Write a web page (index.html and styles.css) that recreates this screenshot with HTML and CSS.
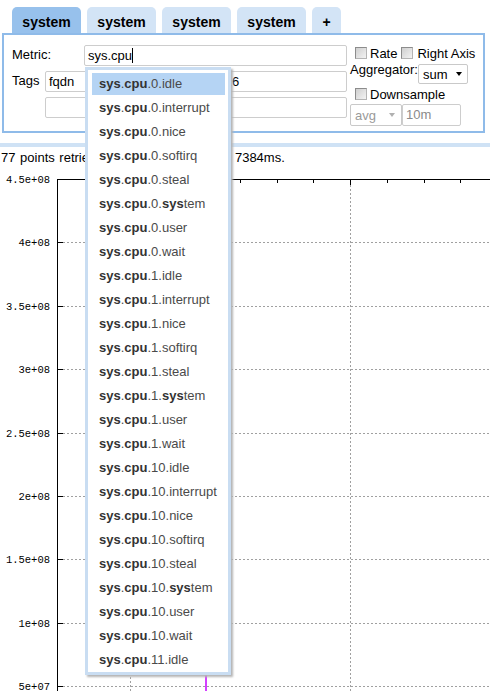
FILE: index.html
```html
<!DOCTYPE html>
<html>
<head>
<meta charset="utf-8">
<title>Graph</title>
<link rel="stylesheet" href="styles.css">
</head>
<body>
<div class="tabs">
  <div class="tab active">system</div>
  <div class="tab">system</div>
  <div class="tab">system</div>
  <div class="tab">system</div>
  <div class="tab plus">+</div>
</div>
<div class="panel">
  <div class="left">
    <div class="row r1"><span class="lbl metric-lbl">Metric:</span><div class="field metric">sys.cpu<span class="caret"></span></div></div>
    <div class="row r2"><span class="lbl tags-lbl">Tags</span><div class="field tagk">fqdn</div><div class="field tagv">10.100.200.16</div></div>
    <div class="row r3"><div class="field tagk"></div><div class="field tagv"></div></div>
  </div>
  <div class="right">
    <div class="rrow rrow1"><span class="cb cb1"></span>Rate<span class="cb cb2"></span>Right Axis</div>
    <div class="rrow rrow2"><span class="agg-lbl">Aggregator:</span><div class="select sum"><span>sum</span><i class="arrow"></i></div></div>
    <div class="rrow rrow3"><span class="cb cb1"></span>Downsample</div>
    <div class="rrow rrow4"><div class="select dis"><span>avg</span><i class="arrow"></i></div><div class="field ds">10m</div></div>
  </div>
</div>
<div class="bar"></div>
<div class="status">77 points retrieved, 77 points plotted in 7384ms.</div>
<svg class="graph" width="490" height="526" viewBox="0 0 490 526">
  <g class="grid" stroke="#a0a0a0" stroke-width="1" stroke-dasharray="2,2" fill="none">
    <line x1="63" y1="77.5" x2="490" y2="77.5"/>
    <line x1="63" y1="141.5" x2="490" y2="141.5"/>
    <line x1="63" y1="204.5" x2="490" y2="204.5"/>
    <line x1="63" y1="268.5" x2="490" y2="268.5"/>
    <line x1="63" y1="331.5" x2="490" y2="331.5"/>
    <line x1="63" y1="394.5" x2="490" y2="394.5"/>
    <line x1="63" y1="458.5" x2="490" y2="458.5"/>
    <line x1="63" y1="521.5" x2="490" y2="521.5"/>
    <line x1="350.5" y1="20" x2="350.5" y2="526"/>
    <line x1="130.5" y1="20" x2="130.5" y2="526"/>
  </g>
  <g stroke="#000" stroke-width="1" fill="none">
    <line x1="57.5" y1="14" x2="57.5" y2="526"/>
    <line x1="57" y1="14.5" x2="490" y2="14.5"/>
    <line x1="57" y1="77.5" x2="63" y2="77.5"/>
    <line x1="57" y1="141.5" x2="63" y2="141.5"/>
    <line x1="57" y1="204.5" x2="63" y2="204.5"/>
    <line x1="57" y1="268.5" x2="63" y2="268.5"/>
    <line x1="57" y1="331.5" x2="63" y2="331.5"/>
    <line x1="57" y1="394.5" x2="63" y2="394.5"/>
    <line x1="57" y1="458.5" x2="63" y2="458.5"/>
    <line x1="57" y1="521.5" x2="63" y2="521.5"/>
    <line x1="93.5" y1="14" x2="93.5" y2="18"/>
    <line x1="130.5" y1="14" x2="130.5" y2="20"/>
    <line x1="167.5" y1="14" x2="167.5" y2="18"/>
    <line x1="203.5" y1="14" x2="203.5" y2="18"/>
    <line x1="240.5" y1="14" x2="240.5" y2="18"/>
    <line x1="277.5" y1="14" x2="277.5" y2="18"/>
    <line x1="313.5" y1="14" x2="313.5" y2="18"/>
    <line x1="350.5" y1="14" x2="350.5" y2="20"/>
    <line x1="387.5" y1="14" x2="387.5" y2="18"/>
    <line x1="424.5" y1="14" x2="424.5" y2="18"/>
    <line x1="460.5" y1="14" x2="460.5" y2="18"/>
  </g>
  <g class="ylabels" text-anchor="end">
    <text x="50" y="18">4.5e+08</text>
    <text x="50" y="81">4e+08</text>
    <text x="50" y="145">3.5e+08</text>
    <text x="50" y="208">3e+08</text>
    <text x="50" y="272">2.5e+08</text>
    <text x="50" y="335">2e+08</text>
    <text x="50" y="398">1.5e+08</text>
    <text x="50" y="462">1e+08</text>
    <text x="50" y="525">5e+07</text>
  </g>
  <line x1="206" y1="480" x2="206" y2="526" stroke="#c400ff" stroke-width="1.5"/>
</svg>
<ul class="suggest">
  <li class="on"><b>sys</b>.<b>cpu</b>.0.idle</li>
  <li><b>sys</b>.<b>cpu</b>.0.interrupt</li>
  <li><b>sys</b>.<b>cpu</b>.0.nice</li>
  <li><b>sys</b>.<b>cpu</b>.0.softirq</li>
  <li><b>sys</b>.<b>cpu</b>.0.steal</li>
  <li><b>sys</b>.<b>cpu</b>.0.<b>sys</b>tem</li>
  <li><b>sys</b>.<b>cpu</b>.0.user</li>
  <li><b>sys</b>.<b>cpu</b>.0.wait</li>
  <li><b>sys</b>.<b>cpu</b>.1.idle</li>
  <li><b>sys</b>.<b>cpu</b>.1.interrupt</li>
  <li><b>sys</b>.<b>cpu</b>.1.nice</li>
  <li><b>sys</b>.<b>cpu</b>.1.softirq</li>
  <li><b>sys</b>.<b>cpu</b>.1.steal</li>
  <li><b>sys</b>.<b>cpu</b>.1.<b>sys</b>tem</li>
  <li><b>sys</b>.<b>cpu</b>.1.user</li>
  <li><b>sys</b>.<b>cpu</b>.1.wait</li>
  <li><b>sys</b>.<b>cpu</b>.10.idle</li>
  <li><b>sys</b>.<b>cpu</b>.10.interrupt</li>
  <li><b>sys</b>.<b>cpu</b>.10.nice</li>
  <li><b>sys</b>.<b>cpu</b>.10.softirq</li>
  <li><b>sys</b>.<b>cpu</b>.10.steal</li>
  <li><b>sys</b>.<b>cpu</b>.10.<b>sys</b>tem</li>
  <li><b>sys</b>.<b>cpu</b>.10.user</li>
  <li><b>sys</b>.<b>cpu</b>.10.wait</li>
  <li><b>sys</b>.<b>cpu</b>.11.idle</li>
</ul>
</body>
</html>
```
FILE: styles.css
```css
* { box-sizing: border-box; }
html, body {
  margin: 0;
  padding: 0;
  background: #fff;
  overflow: hidden;
}
body {
  width: 490px;
  height: 691px;
  position: relative;
  font-family: "Liberation Sans", Arial, sans-serif;
  font-size: 13px;
  color: #000;
}

/* tabs */
.tabs {
  display: flex;
  gap: 6px;
  padding: 7px 0 0 12px;
  height: 33px;
}
.tab {
  width: 69px;
  height: 26px;
  background: #d3e4f6;
  border-radius: 5px 5px 0 0;
  font-size: 14px;
  font-weight: bold;
  text-align: center;
  line-height: 31px;
  overflow: hidden;
  color: #000;
}
.tab.active { background: #97c1ec; }
.tab.plus { width: 29px; }

/* panel */
.panel {
  display: flex;
  margin: 0 5px 0 2px;
  border: 2px solid #8fbbe9;
  padding: 10px 4px 5px 8px;
}
.left { width: 335px; }
.row { display: flex; }
.r2, .r3 { margin-top: 5px; }
.r3 { padding-left: 33px; }
.lbl { line-height: 20px; }
.metric-lbl { width: 72px; }
.tags-lbl { width: 33px; }
.field {
  height: 21px;
  border: 1px solid #cdcdcd;
  border-radius: 2px;
  padding: 0 3px;
  line-height: 19px;
  background: #fff;
  white-space: nowrap;
  overflow: hidden;
}
.metric { width: 263px; }
.caret {
  display: inline-block;
  width: 1px;
  height: 15px;
  background: #000;
  vertical-align: -3px;
}
.tagk { width: 103px; }
.tagv { width: 195px; margin-left: 4px; }

.right { margin-left: 3px; width: 132px; }
.rrow { display: flex; align-items: center; white-space: nowrap; }
.rrow1 { height: 16px; }
.rrow2 { height: 22px; margin-top: 1px; align-items: flex-start; }
.rrow3 { height: 16px; margin-top: 2px; }
.rrow4 { height: 22px; margin-top: 2px; }
.agg-lbl { width: 68px; line-height: 15px; }
.cb {
  display: inline-block;
  width: 12px;
  height: 12px;
  border: 1px solid #8c8c8c;
  border-right-color: #b4b4b4;
  border-bottom-color: #b4b4b4;
  background: linear-gradient(135deg, #cfcfcf, #f3f3f3);
}
.cb1 { margin: 0 3px 0 5px; }
.cb2 { margin: 0 4px 0 4px; }
.select {
  display: flex;
  align-items: center;
  border: 1px solid #c9c9c9;
  border-radius: 2px;
  background: #fff;
  padding-left: 4px;
}
.select.sum { width: 50px; height: 20px; margin-top: 2px; }
.select.dis { width: 52px; height: 22px; color: #9a9a9a; }
.arrow {
  margin-left: auto;
  margin-right: 5px;
  width: 0;
  height: 0;
  border-left: 3px solid transparent;
  border-right: 3px solid transparent;
  border-top: 4px solid #000;
}
.select.dis .arrow { border-top-color: #b0b0b0; margin-right: 6px; }
.field.ds { width: 59px; height: 22px; line-height: 20px; color: #8a8a8a; }

.bar {
  height: 4px;
  margin-top: 10px;
  background: #cfe2f5;
}
.status {
  margin-top: 3px;
  line-height: 15px;
  height: 15px;
  padding-left: 1px;
  word-spacing: 1px;
  white-space: nowrap;
}
.graph { display: block; }
.ylabels text {
  font-family: "Liberation Mono", "DejaVu Sans Mono", monospace;
  font-size: 10.5px;
  fill: #000;
}

/* suggest dropdown */
.suggest {
  position: absolute;
  left: 85px;
  top: 67px;
  width: 146px;
  margin: 0;
  list-style: none;
  background: #fff;
  border: 3px solid #c9ddf2;
  padding: 3px 3px 1px 4px;
  box-shadow: 2px 2px 2px #b5b5b5;
  z-index: 5;
}
.suggest li {
  height: 22px;
  line-height: 22px;
  padding-left: 7px;
  margin-top: 2px;
  color: #4a4a4a;
  white-space: nowrap;
}
.suggest li:first-child { margin-top: 0; }
.suggest li.on { background: #b5d4f4; }
.suggest b { color: #333; font-weight: bold; }
```
